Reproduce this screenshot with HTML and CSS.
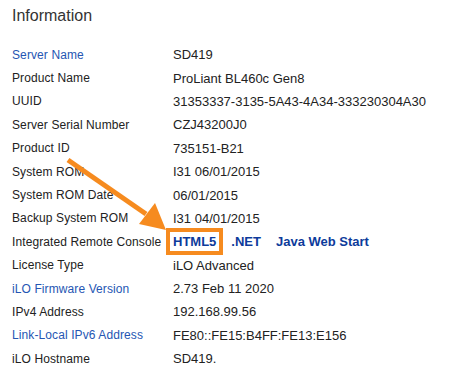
FILE: index.html
```html
<!DOCTYPE html>
<html lang="en">
<head>
  <meta charset="UTF-8">
  <title>Information - iLO</title>
  <link rel="stylesheet" href="styles.css">
</head>
<body>
  <div class="page">
    <h2>Information</h2>

    <div class="info">
      <a class="label link" href="#">Server Name</a>
      <span class="value">SD419</span>

      <span class="label">Product Name</span>
      <span class="value">ProLiant BL460c Gen8</span>

      <span class="label">UUID</span>
      <span class="value">31353337-3135-5A43-4A34-333230304A30</span>

      <span class="label">Server Serial Number</span>
      <span class="value">CZJ43200J0</span>

      <span class="label">Product ID</span>
      <span class="value">735151-B21</span>

      <span class="label">System ROM</span>
      <span class="value">I31 06/01/2015</span>

      <span class="label">System ROM Date</span>
      <span class="value">06/01/2015</span>

      <span class="label">Backup System ROM</span>
      <span class="value">I31 04/01/2015</span>

      <span class="label">Integrated Remote Console</span>
      <span class="value consoles">
        <a class="console highlight" href="#">HTML5</a>
        <a class="console" href="#">.NET</a>
        <a class="console" href="#">Java Web Start</a>
      </span>

      <span class="label">License Type</span>
      <span class="value">iLO Advanced</span>

      <a class="label link" href="#">iLO Firmware Version</a>
      <span class="value">2.73 Feb 11 2020</span>

      <span class="label">IPv4 Address</span>
      <span class="value">192.168.99.56</span>

      <a class="label link" href="#">Link-Local IPv6 Address</a>
      <span class="value">FE80::FE15:B4FF:FE13:E156</span>

      <span class="label">iLO Hostname</span>
      <span class="value">SD419.</span>
    </div>

    <!-- annotation arrow -->
    <svg class="arrow" width="465" height="391" viewBox="0 0 465 391">
      <line x1="68" y1="160" x2="146" y2="214" stroke="#f68b1f" stroke-width="5"/>
      <polygon points="155,203 139,224 166,230" fill="#f68b1f"/>
    </svg>
  </div>
</body>
</html>
```

FILE: styles.css
```css
:root {
  --text: #222;
  --label-link: #2556b3;
  --console-link: #0d3b9b;
  --accent: #f68b1f;
  --font-family: 'Liberation Sans', Arial, sans-serif;
}

body {
  margin: 0;
  background: #fff;
  font-family: var(--font-family);
  color: var(--text);
}

.page {
  position: relative;
  padding: 6px 12px 0;
}

h2 {
  font-size: 16px;
  font-weight: 400;
  line-height: 20px;
  margin: 0 0 17px;
  color: #333;
}

.info {
  display: grid;
  grid-template-columns: 161px auto;
  grid-auto-rows: 23.4px;
  align-items: center;
}

.label {
  font-size: 12px;
  letter-spacing: 0.1px;
  color: var(--text);
  text-decoration: none;
}

.label.link {
  color: var(--label-link);
}

.value {
  font-size: 13px;
}

.consoles {
  display: flex;
  gap: 15px;
  align-items: center;
}

.console {
  font-weight: 700;
  color: var(--console-link);
  text-decoration: none;
}

.highlight {
  outline: 4px solid var(--accent);
  padding: 2px 3px;
  margin: 0 -3px;
}

.arrow {
  position: absolute;
  left: 0;
  top: 0;
  pointer-events: none;
}
```
